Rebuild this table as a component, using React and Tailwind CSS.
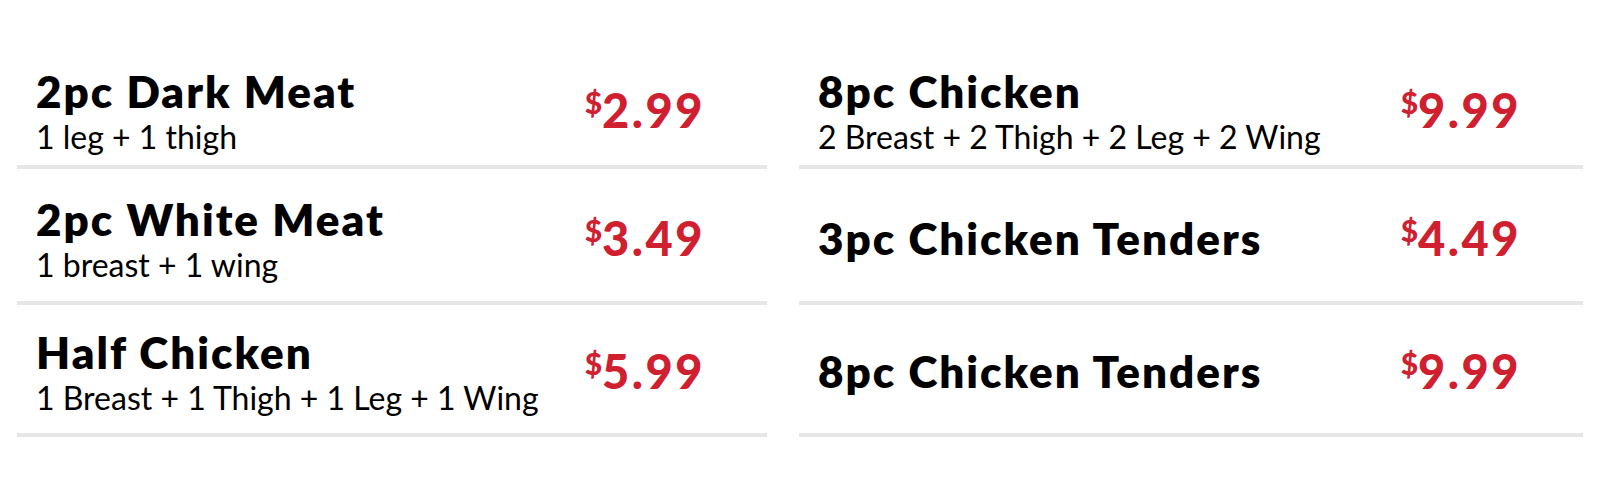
const LEFT = [
  { title: '2pc Dark Meat', desc: '1 leg + 1 thigh', price: '2.99' },
  { title: '2pc White Meat', desc: '1 breast + 1 wing', price: '3.49' },
  { title: 'Half Chicken', desc: '1 Breast + 1 Thigh + 1 Leg + 1 Wing', price: '5.99' },
];

const RIGHT = [
  { title: '8pc Chicken', desc: '2 Breast + 2 Thigh + 2 Leg + 2 Wing', price: '9.99' },
  { title: '3pc Chicken Tenders', price: '4.49' },
  { title: '8pc Chicken Tenders', price: '9.99' },
];

// row heights: first row sits a bit tighter to its divider
const ROW_CLASSES = [
  'h-[129px] pt-[16px]',
  'h-[136px] pt-[6px]',
  'h-[132px] pt-[4px]',
];

function Price({ value }) {
  return (
    <div className="flex items-start font-black leading-none text-[#d0202f]">
      <span className="mt-[0px] text-[30px]">$</span>
      <span className="text-[47px] tracking-[2.5px]">{value}</span>
    </div>
  );
}

function MenuRow({ item, index }) {
  return (
    <div
      className={`box-border flex items-center justify-between border-b-4 border-[#e6e6e6] pl-[19px] pr-[62px] ${ROW_CLASSES[index]}`}
    >
      <div className="flex flex-col">
        <p className="text-[44px] font-extrabold leading-[48px] tracking-[2px] text-black">{item.title}</p>
        {item.desc && (
          <p className="mt-[5px] text-[32px] font-normal leading-[34px] text-black">{item.desc}</p>
        )}
      </div>
      <Price value={item.price} />
    </div>
  );
}

export default function App() {
  return (
    <div className="h-[480px] w-[1600px] bg-white pt-[40px] font-['Lato',sans-serif]">
      <div className="flex gap-[32px] pl-[17px]">
        <div className="flex w-[750px] flex-col">
          {LEFT.map((item, i) => (
            <MenuRow key={item.title} item={item} index={i} />
          ))}
        </div>
        <div className="flex w-[784px] flex-col">
          {RIGHT.map((item, i) => (
            <MenuRow key={item.title} item={item} index={i} />
          ))}
        </div>
      </div>
    </div>
  );
}
